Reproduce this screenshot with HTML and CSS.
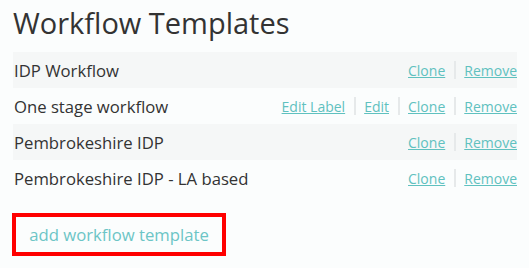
FILE: index.html
```html
<!DOCTYPE html>
<html>
<head>
<meta charset="utf-8">
<link rel="stylesheet" href="styles.css">
</head>
<body>
<div class="page">
  <h1 class="title">Workflow Templates</h1>
  <div class="list">
    <div class="row">
      <span class="name">IDP Workflow</span>
      <span class="actions"><a href="#">Clone</a><span class="sep"></span><a href="#">Remove</a></span>
    </div>
    <div class="row">
      <span class="name">One stage workflow</span>
      <span class="actions"><a href="#">Edit Label</a><span class="sep"></span><a href="#">Edit</a><span class="sep"></span><a href="#">Clone</a><span class="sep"></span><a href="#">Remove</a></span>
    </div>
    <div class="row">
      <span class="name">Pembrokeshire IDP</span>
      <span class="actions"><a href="#">Clone</a><span class="sep"></span><a href="#">Remove</a></span>
    </div>
    <div class="row">
      <span class="name">Pembrokeshire IDP - LA based</span>
      <span class="actions"><a href="#">Clone</a><span class="sep"></span><a href="#">Remove</a></span>
    </div>
  </div>
  <div class="add-wrap">
    <a class="add" href="#">add workflow template</a>
  </div>
</div>
</body>
</html>
```

FILE: styles.css
```css
html, body {
  margin: 0;
  padding: 0;
  background: #fbfdfd;
}
body {
  font-family: "Open Sans", sans-serif;
  color: #333;
}
.page {
  padding: 6px 12px 0 13px;
}
.title {
  margin: 0 0 13px 0;
  font-size: 29px;
  line-height: 33px;
  font-weight: 400;
  color: #333;
}
.list {
  display: flex;
  flex-direction: column;
}
.row {
  display: flex;
  align-items: center;
  justify-content: space-between;
  height: 36px;
  font-size: 16.7px;
  padding-left: 1px;
}
.row:nth-child(odd) {
  background: #f5f7f7;
}
.actions {
  display: flex;
  align-items: center;
  font-size: 14px;
}
.actions a {
  color: #5fc1bf;
  text-decoration: underline;
}
.sep {
  width: 2px;
  height: 18px;
  background: #e6e9ea;
  margin: 0 8px 0 9px;
}
.add-wrap {
  display: flex;
  margin-top: 17px;
  margin-left: -1px;
}
.add {
  border: 4px solid #ff0000;
  width: 206px;
  height: 35px;
  display: flex;
  align-items: center;
  justify-content: center;
  font-size: 16.7px;
  color: #6cc5c6;
  text-decoration: none;
}
```
